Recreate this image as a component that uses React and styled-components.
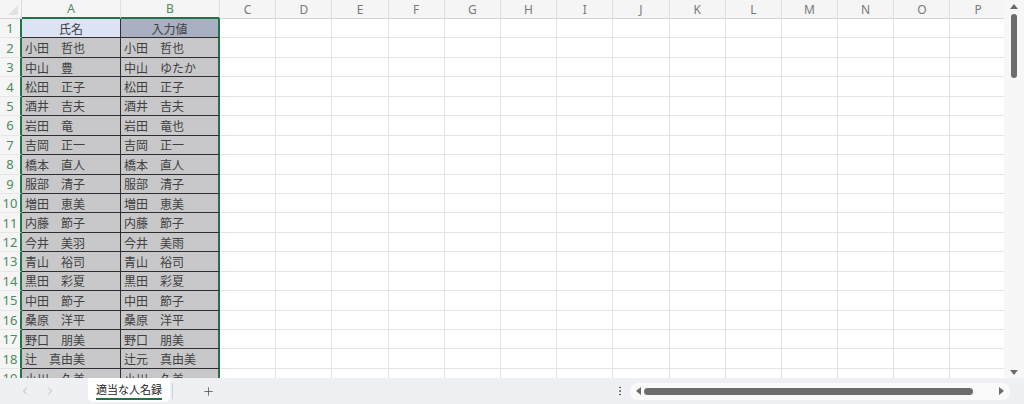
import React from "react";
import styled, { createGlobalStyle } from "styled-components";
import { ChevronLeft, ChevronRight, Plus, EllipsisVertical } from "lucide-react";

const GlobalStyle = createGlobalStyle`
  html, body {
    margin: 0;
    padding: 0;
    background: #ffffff;
  }
  body {
    font-family: "Noto Sans", "Noto Sans CJK JP", sans-serif;
  }
  * {
    box-sizing: border-box;
  }
`;

const GREEN = "#217346";

const Window = styled.div`
  width: 1024px;
  height: 404px;
  display: flex;
  flex-direction: column;
  overflow: hidden;
  background: #fff;
`;

const Main = styled.div`
  display: flex;
  height: 378px;
`;

const Sheet = styled.div`
  flex: 1;
  display: grid;
  grid-template-columns: 22px 99px 99px repeat(14, 56.2px);
  grid-template-rows: 19px;
  grid-auto-rows: 19.45px;
  align-content: start;
  overflow: hidden;
`;

const Corner = styled.div`
  position: relative;
  background: #f5f5f5;
  border-right: 1px solid #dcdcdc;
  border-bottom: 1px solid #d4d4d4;
  &::after {
    content: "";
    position: absolute;
    right: 3px;
    bottom: 3px;
    border-left: 10px solid transparent;
    border-bottom: 10px solid #e2e2e2;
  }
`;

const ColHead = styled.div`
  display: flex;
  align-items: center;
  justify-content: center;
  background: #f5f5f5;
  font-size: 12px;
  color: ${(p) => (p.$selected ? "#4f8a62" : "#7a7a7a")};
  border-right: 1px solid #e0e0e0;
  border-bottom: ${(p) => (p.$selected ? `2px solid ${GREEN}` : "1px solid #d4d4d4")};
`;

const RowHead = styled.div`
  display: flex;
  align-items: center;
  justify-content: center;
  background: #f5f5f5;
  font-size: 13px;
  color: ${(p) => (p.$selected ? "#4f8a62" : "#7a7a7a")};
  border-right: ${(p) => (p.$selected ? `2px solid ${GREEN}` : "1px solid #d4d4d4")};
  border-bottom: 1px solid #e6e6e6;
`;

const Cell = styled.div`
  border-right: 1px solid #e3e3e3;
  border-bottom: 1px solid #e3e3e3;
`;

const bgFor = (p) => {
  if (p.$header) return p.$col === "A" ? "#dbe3f5" : "#a9b0c2";
  return "#c8c8ca";
};

const DataCell = styled.div`
  display: flex;
  align-items: center;
  justify-content: ${(p) => (p.$header ? "center" : "flex-start")};
  padding-left: ${(p) => (p.$header ? "0" : "3px")};
  background: ${bgFor};
  font-family: "Noto Sans CJK JP", sans-serif;
  font-size: 12px;
  color: #404040;
  white-space: pre;
  overflow: hidden;
  border-bottom: 1px solid #2e2e2e;
  border-right: ${(p) => (p.$col === "A" ? "1px solid #2e2e2e" : `2px solid ${GREEN}`)};
`;

const VScroll = styled.div`
  width: 20px;
  background: #f7f7f8;
  display: flex;
  flex-direction: column;
  align-items: center;
  padding: 4px 0 3px;
`;

const Arrow = styled.div`
  width: 0;
  height: 0;
  border-left: 4px solid transparent;
  border-right: 4px solid transparent;
  ${(p) =>
    p.$dir === "up"
      ? "border-bottom: 5px solid #6b6b6b;"
      : "border-top: 5px solid #6b6b6b;"}
`;

const VTrack = styled.div`
  flex: 1;
  width: 100%;
  display: flex;
  justify-content: center;
  padding-top: 5px;
`;

const VThumb = styled.div`
  width: 6px;
  height: 64px;
  border-radius: 3px;
  background: #6d6d6d;
`;

const BottomBar = styled.div`
  height: 26px;
  display: flex;
  align-items: center;
  background: #eff0f4;
`;

const NavButton = styled.div`
  width: 25px;
  display: flex;
  align-items: center;
  justify-content: center;
  color: #a5a5a5;
  &:first-child {
    margin-left: 12px;
  }
`;

const Tab = styled.div`
  margin-left: 26px;
  height: 24px;
  align-self: flex-start;
  padding: 0 8px;
  background: #fff;
  border-radius: 0 0 5px 5px;
  display: flex;
  align-items: center;
`;

const TabLabel = styled.span`
  font-family: "Noto Sans CJK JP", sans-serif;
  font-size: 11px;
  color: #222;
  line-height: 15px;
  border-bottom: 2px solid ${GREEN};
  padding-bottom: 1px;
  margin-top: 2px;
`;

const TabDivider = styled.div`
  width: 1px;
  height: 16px;
  background: #d0d0d0;
  margin-left: 2px;
`;

const AddButton = styled.div`
  margin-left: 29px;
  display: flex;
  color: #555;
`;

const Spacer = styled.div`
  flex: 1;
`;

const HScrollArea = styled.div`
  width: 414px;
  display: flex;
  align-items: center;
  padding-right: 14px;
`;

const Dots = styled.div`
  width: 20px;
  display: flex;
  justify-content: center;
  color: #555;
`;

const HTrack = styled.div`
  flex: 1;
  height: 17px;
  background: #fafafa;
  border-radius: 8px;
  display: flex;
  align-items: center;
  padding: 0 6px;
  gap: 3px;
`;

const HArrow = styled.div`
  width: 0;
  height: 0;
  border-top: 4px solid transparent;
  border-bottom: 4px solid transparent;
  ${(p) =>
    p.$dir === "left"
      ? "border-right: 5px solid #6b6b6b;"
      : "border-left: 5px solid #6b6b6b; margin-left: auto;"}
`;

const HThumb = styled.div`
  width: 329px;
  height: 7px;
  border-radius: 4px;
  background: #6d6d6d;
`;

const names = [
  ["氏名", "入力値"],
  ["小田　哲也", "小田　哲也"],
  ["中山　豊", "中山　ゆたか"],
  ["松田　正子", "松田　正子"],
  ["酒井　吉夫", "酒井　吉夫"],
  ["岩田　竜", "岩田　竜也"],
  ["吉岡　正一", "吉岡　正一"],
  ["橋本　直人", "橋本　直人"],
  ["服部　清子", "服部　清子"],
  ["増田　恵美", "増田　恵美"],
  ["内藤　節子", "内藤　節子"],
  ["今井　美羽", "今井　美雨"],
  ["青山　裕司", "青山　裕司"],
  ["黒田　彩夏", "黒田　彩夏"],
  ["中田　節子", "中田　節子"],
  ["桑原　洋平", "桑原　洋平"],
  ["野口　朋美", "野口　朋美"],
  ["辻　真由美", "辻元　真由美"],
  ["小川　久美", "小川　久美"],
];

const emptyCols = "CDEFGHIJKLMNOP".split("");

export default function App() {
  return (
    <Window>
      <GlobalStyle />
      <Main>
        <Sheet>
          <Corner />
          <ColHead $selected>A</ColHead>
          <ColHead $selected>B</ColHead>
          {emptyCols.map((c) => (
            <ColHead key={c}>{c}</ColHead>
          ))}
          {names.map(([a, b], i) => (
            <React.Fragment key={i}>
              <RowHead $selected>{i + 1}</RowHead>
              <DataCell $col="A" $header={i === 0}>{a}</DataCell>
              <DataCell $col="B" $header={i === 0}>{b}</DataCell>
              {emptyCols.map((c) => (
                <Cell key={c} />
              ))}
            </React.Fragment>
          ))}
          <RowHead>20</RowHead>
          <Cell />
          <Cell />
          {emptyCols.map((c) => (
            <Cell key={c} />
          ))}
        </Sheet>
        <VScroll>
          <Arrow $dir="up" />
          <VTrack>
            <VThumb />
          </VTrack>
          <Arrow $dir="down" />
        </VScroll>
      </Main>
      <BottomBar>
        <NavButton>
          <ChevronLeft size={12} strokeWidth={1.5} />
        </NavButton>
        <NavButton>
          <ChevronRight size={12} strokeWidth={1.5} />
        </NavButton>
        <Tab>
          <TabLabel>適当な人名録</TabLabel>
        </Tab>
        <TabDivider />
        <AddButton>
          <Plus size={13} strokeWidth={1.5} />
        </AddButton>
        <Spacer />
        <HScrollArea>
          <Dots>
            <EllipsisVertical size={12} strokeWidth={2} />
          </Dots>
          <HTrack>
            <HArrow $dir="left" />
            <HThumb />
            <HArrow $dir="right" />
          </HTrack>
        </HScrollArea>
      </BottomBar>
    </Window>
  );
}
